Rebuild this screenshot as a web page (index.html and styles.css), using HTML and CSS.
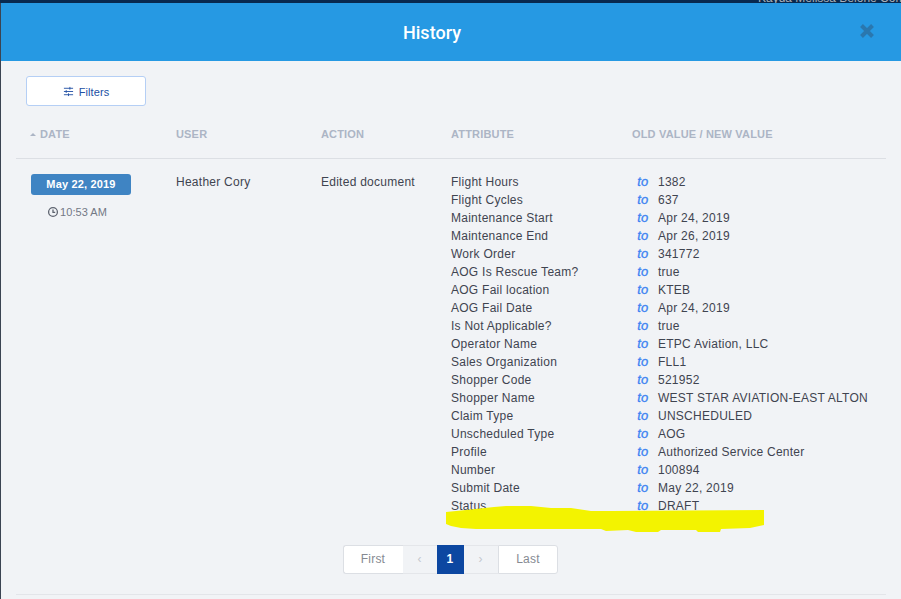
FILE: index.html
```html
<!DOCTYPE html>
<html lang="en">
<head>
<meta charset="UTF-8">
<meta name="viewport" content="width=device-width, initial-scale=1.0">
<link rel="stylesheet" href="styles.css">
<title>History</title>
</head>
<body>
<div class="backdrop-strip"><span>Kayda Melissa Belone Com</span></div>

<div class="modal">
  <div class="modal-header">
    <div class="modal-title">History</div>
    <svg class="close-icon" viewBox="0 0 16 16"><path d="M2.5 2.5L13.5 13.5M13.5 2.5L2.5 13.5"/></svg>
  </div>

  <div class="modal-body">
    <button class="filters-btn">
      <svg viewBox="0 0 12 12"><path d="M1 2.5H11M1 6H11M1 9.5H11"/><path class="knob" d="M7.5 1V4M3.5 4.5V7.5M6 8V11"/></svg>
      Filters
    </button>

    <div class="table-row table-head">
      <div class="date-head"><i class="sort-arrow"></i>DATE</div>
      <div>USER</div>
      <div>ACTION</div>
      <div>ATTRIBUTE</div>
      <div class="value-head">OLD VALUE / NEW VALUE</div>
    </div>

    <div class="table-row table-entry">
      <div class="date-cell">
        <div class="date-badge">May 22, 2019</div>
        <div class="time">
          <svg viewBox="0 0 12 12"><circle cx="6" cy="6" r="4.4"/><path d="M6 3.4V6.3H8.2"/></svg>
          10:53 AM
        </div>
      </div>
      <div>Heather Cory</div>
      <div>Edited document</div>
      <div class="changes">
        <div class="change"><span>Flight Hours</span><em>to</em><span>1382</span></div>
        <div class="change"><span>Flight Cycles</span><em>to</em><span>637</span></div>
        <div class="change"><span>Maintenance Start</span><em>to</em><span>Apr 24, 2019</span></div>
        <div class="change"><span>Maintenance End</span><em>to</em><span>Apr 26, 2019</span></div>
        <div class="change"><span>Work Order</span><em>to</em><span>341772</span></div>
        <div class="change"><span>AOG Is Rescue Team?</span><em>to</em><span>true</span></div>
        <div class="change"><span>AOG Fail location</span><em>to</em><span>KTEB</span></div>
        <div class="change"><span>AOG Fail Date</span><em>to</em><span>Apr 24, 2019</span></div>
        <div class="change"><span>Is Not Applicable?</span><em>to</em><span>true</span></div>
        <div class="change"><span>Operator Name</span><em>to</em><span>ETPC Aviation, LLC</span></div>
        <div class="change"><span>Sales Organization</span><em>to</em><span>FLL1</span></div>
        <div class="change"><span>Shopper Code</span><em>to</em><span>521952</span></div>
        <div class="change"><span>Shopper Name</span><em>to</em><span>WEST STAR AVIATION-EAST ALTON</span></div>
        <div class="change"><span>Claim Type</span><em>to</em><span>UNSCHEDULED</span></div>
        <div class="change"><span>Unscheduled Type</span><em>to</em><span>AOG</span></div>
        <div class="change"><span>Profile</span><em>to</em><span>Authorized Service Center</span></div>
        <div class="change"><span>Number</span><em>to</em><span>100894</span></div>
        <div class="change"><span>Submit Date</span><em>to</em><span>May 22, 2019</span></div>
        <div class="change"><span>Status</span><em>to</em><span>DRAFT</span></div>
      </div>
    </div>

    <div class="pager">
      <div class="page-end first">First</div>
      <div class="page-arrow">&lsaquo;</div>
      <div class="page-num">1</div>
      <div class="page-arrow">&rsaquo;</div>
      <div class="page-end last">Last</div>
    </div>
    <div class="bottom-line"></div>
  </div>
</div>

<!-- marker scribble somebody drew over the screenshot -->
<svg class="scribble" viewBox="0 0 318 28"><path d="M0 7L20 5L48 2L60 1H85L105 3H125L145 6H165L318 5V20L304 23L275 24L274 27H252L250 25H215L212 27H190L182 25L160 26L155 24H30L15 23L5 21L0 19Z"/></svg>
</body>
</html>
```

FILE: styles.css
```css
* {
  box-sizing: border-box;
}
html, body {
  height: 100%;
}
body {
  margin: 0;
  overflow: hidden;
  background-color: #3b4452;
  font-family: "Liberation Sans", Arial, sans-serif;
  font-size: 12px;
  letter-spacing: 0.26px;
  color: #3f4450;
}
.backdrop-strip {
  height: 3px;
  padding-left: 758px;
  background-color: #08294f;
  overflow: hidden;
  color: #a9b0ba;
  line-height: 3px;
  letter-spacing: 0;
  white-space: nowrap;
}
.backdrop-strip span {
  position: relative;
  top: -3px;
}
.modal {
  margin-left: 1px;
  height: 596px;
  background-color: #f1f3f6;
}
.modal-header {
  height: 58px;
  padding-right: 38px;
  background-color: #2699e3;
  display: flex;
  align-items: center;
  justify-content: center;
  position: relative;
}
.modal-title {
  color: #fff;
  font-family: Roboto, Arial, sans-serif;
  font-size: 18px;
  font-weight: 500;
  letter-spacing: 0;
}
.close-icon {
  position: absolute;
  right: 26px;
  top: 20px;
  width: 16px;
  height: 16px;
  fill: none;
  stroke: #2a77ae;
  stroke-width: 4;
}
.modal-body {
  padding: 15px 15px 0 15px;
}
.filters-btn {
  display: flex;
  align-items: center;
  justify-content: center;
  gap: 5px;
  width: 120px;
  height: 30px;
  margin-left: 10px;
  padding: 1px 0 0;
  background-color: #fff;
  border: 1px solid #b5cff5;
  border-radius: 3px;
  color: #2250a4;
  font-family: "Liberation Sans", Arial, sans-serif;
  font-size: 11px;
  letter-spacing: 0.1px;
}
.filters-btn svg {
  width: 11px;
  height: 11px;
  fill: none;
  stroke: #2250a4;
  stroke-width: 1;
}
.table-row {
  display: grid;
  grid-template-columns: 160px 145px 130px 1fr;
}
.table-head {
  grid-template-columns: 160px 145px 130px 181px 1fr;
  height: 53px;
  padding-top: 21px;
  border-bottom: 1px solid #dcdfe4;
  color: #acb5c5;
  font-size: 11px;
  font-weight: bold;
  letter-spacing: 0.17px;
  line-height: 14px;
}
.date-head {
  height: 14px;
  padding-left: 14px;
  display: flex;
  align-items: center;
}
.sort-arrow {
  width: 0;
  height: 0;
  margin-right: 4px;
  border-left: 3px solid transparent;
  border-right: 3px solid transparent;
  border-bottom: 3px solid #acb5c5;
}
.value-head {
  white-space: nowrap;
}
.table-entry {
  padding-top: 14px;
  line-height: 18px;
}
.date-cell {
  padding-left: 15px;
}
.date-badge {
  width: 100px;
  height: 21px;
  margin-top: 1px;
  background-color: #3f84c3;
  border-radius: 3px;
  color: #fff;
  font-size: 11px;
  font-weight: bold;
  letter-spacing: 0.17px;
  line-height: 21px;
  text-align: center;
}
.time {
  display: flex;
  align-items: center;
  justify-content: center;
  gap: 1px;
  width: 90px;
  margin: 8px 0 0 1px;
  color: #737885;
  font-size: 11px;
  letter-spacing: 0.05px;
}
.time svg {
  width: 12px;
  height: 12px;
  fill: none;
  stroke: #5e636f;
  stroke-width: 1.3;
}
.change {
  display: grid;
  grid-template-columns: 186.2px 20.8px 1fr;
  white-space: nowrap;
}
.change em {
  color: #3a82f2;
  font-size: 13px;
  -webkit-text-stroke: 0.3px #3a82f2;
}
.pager {
  display: flex;
  justify-content: center;
  height: 29px;
  margin: 30px 0 0 0;
  padding-right: 2px;
  color: #868a92;
  letter-spacing: 0.2px;
  line-height: 27px;
  text-align: center;
}
.page-end {
  width: 60px;
  background-color: #fff;
  border: 1px solid #dcdfe4;
}
.first {
  border-right: 0;
  border-radius: 3px 0 0 3px;
}
.last {
  padding-left: 1px;
  border-radius: 0 3px 3px 0;
}
.page-arrow {
  width: 34px;
  color: #c3c7ce;
  background-color: #f1f3f6;
  border-top: 1px solid #e4e6ea;
  border-bottom: 1px solid #e4e6ea;
}
.page-num {
  width: 27px;
  background-color: #0c47a1;
  color: #fff;
  font-weight: bold;
  line-height: 29px;
}
.bottom-line {
  height: 1px;
  margin-top: 20px;
  background-color: #e3e5e9;
}
.scribble {
  position: absolute;
  left: 446px;
  top: 505px;
  width: 318px;
  height: 28px;
  fill: #f3f300;
}
```
